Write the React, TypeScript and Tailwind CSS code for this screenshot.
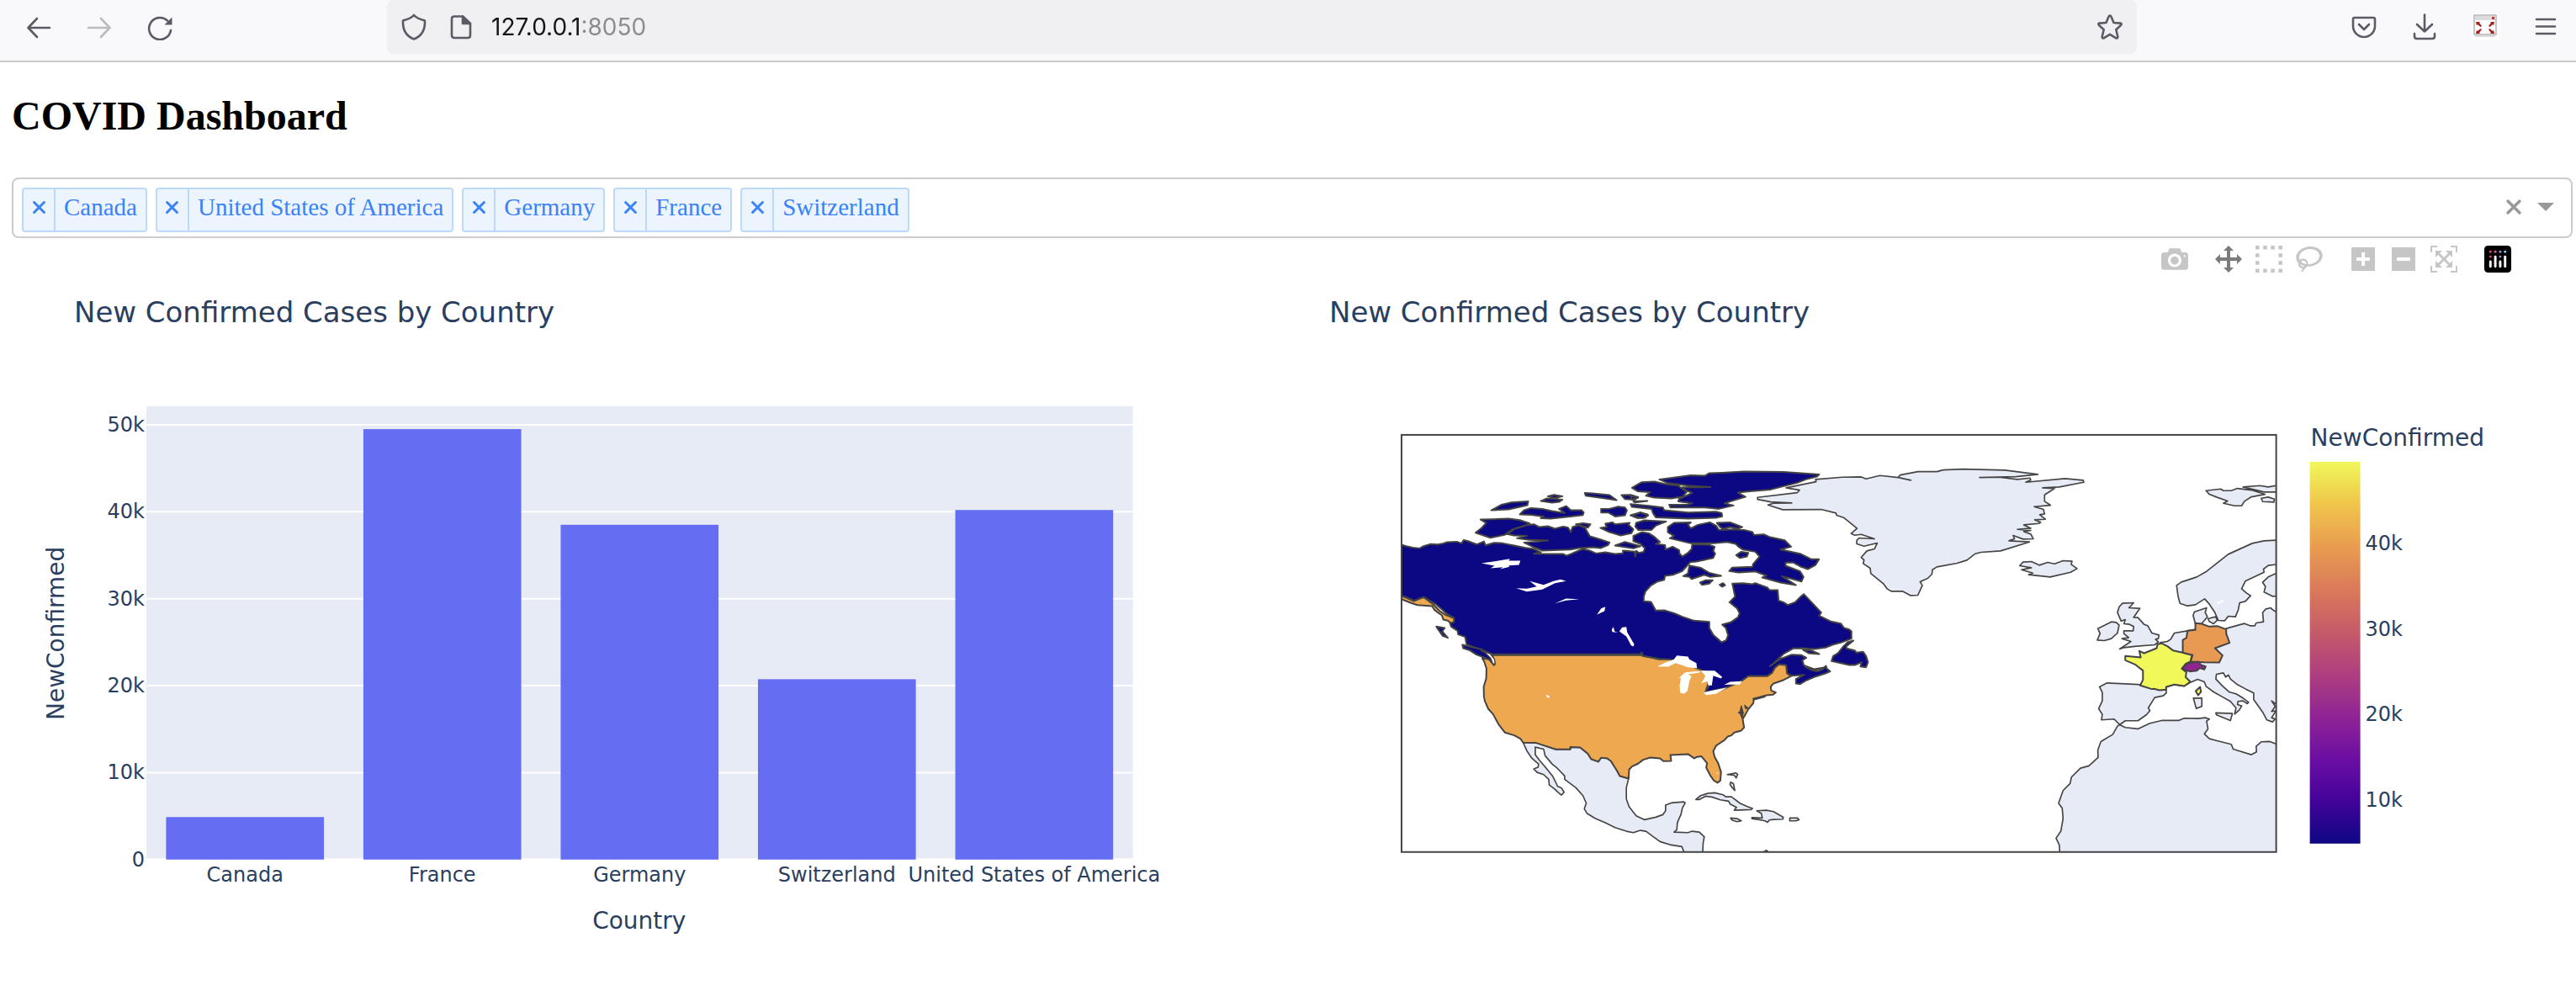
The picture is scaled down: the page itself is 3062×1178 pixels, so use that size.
import { useState } from "react";
import type { ReactNode } from "react";

/* ------------------------------ browser chrome ------------------------------ */

function ToolButton({ label, children }: { label: string; children: ReactNode }) {
  return (
    <button type="button" aria-label={label} className="flex h-16 w-[72px] items-center justify-center text-[#5b5b66]">
      {children}
    </button>
  );
}

function Line({ d, className = "" }: { d: string; className?: string }) {
  return (
    <svg
      viewBox="0 0 32 32"
      className={`size-8 shrink-0 ${className}`}
      fill="none"
      stroke="currentColor"
      strokeWidth="2.6"
      strokeLinecap="round"
      strokeLinejoin="round"
    >
      <path d={d} />
    </svg>
  );
}

function ExtensionIcon() {
  return (
    <svg viewBox="0 0 32 32" className="size-8">
      <rect width="32" height="32" fill="#fff" />
      <rect x="3" y="2" width="26" height="23" fill="#fff" stroke="#b4b4b8" strokeWidth="1.5" />
      <rect x="4" y="3" width="24" height="5" fill="#dcdce0" />
      <rect x="24" y="4" width="3" height="3" fill="#c0392b" />
      <path d="M4 27h24" stroke="#d0d0d0" strokeWidth="1.5" />
      <g fill="#a3201b">
        <path d="M5 10h5l-1 1 3 4-1.500 1-3.500-3-1 1.500z" />
        <path d="M27 10h-5l1 1-3 4 1.500 1 3.500-3 1 1.500z" />
        <path d="M5 24h5l-1-1 3-4-1.500-1-3.500 3-1-1.500z" />
        <path d="M27 24h-5l1-1-3-4 1.500-1 3.500 3 1-1.500z" />
      </g>
    </svg>
  );
}

function BrowserBar() {
  const [url, setUrl] = useState("127.0.0.1:8050");
  return (
    <header className="flex items-start border-b-2 border-[#cccccd] bg-[#f9f9fb] pb-2">
      <nav className="flex pl-[10px]">
        <ToolButton label="Back">
          <Line d="M29 17H3.500M14 6L3.500 17L14 28" />
        </ToolButton>
        <ToolButton label="Forward">
          <Line className="text-[#bbbbc0]" d="M3 17H28.500M18 6L28.500 17L18 28" />
        </ToolButton>
        <ToolButton label="Reload">
          <svg viewBox="0 0 32 32" className="size-8" fill="none" stroke="currentColor" strokeWidth="2.6" strokeLinecap="round">
            <path d="M29 20A13 13 0 1 1 25 8.500" />
            <path d="M30.500 4.500v9h-9z" fill="currentColor" stroke="none" />
          </svg>
        </ToolButton>
      </nav>
      <div className="mx-[234px] flex h-16 flex-1 items-center rounded-lg bg-[#f0f0f2] px-4 text-[#5b5b66]">
        <Line d="M16 2C19 5.500 25 7.500 29 8.500C29.500 19 25 27 16 30.500C7 27 2.500 19 3 8.500C7 7.500 13 5.500 16 2Z" />
        <svg viewBox="0 0 32 32" className="ml-6 size-8 shrink-0" fill="none" stroke="currentColor" strokeWidth="2.6" strokeLinejoin="round">
          <path d="M8 3.500H18L27 12V26Q27 29 24 29H8Q5 29 5 26V6.500Q5 3.500 8 3.500Z" />
          <path d="M18 3.500V12H27Z" fill="currentColor" />
        </svg>
        <input
          aria-label="Address"
          value={url}
          onChange={(e) => setUrl(e.target.value)}
          className="ml-5 min-w-0 flex-1 bg-[linear-gradient(to_right,#15141a_108px,#8a8a8f_108px)] bg-clip-text font-[Inter,sans-serif] text-[28px] leading-9 text-transparent outline-none"
        />
        <button type="button" aria-label="Bookmark this page">
          <Line d="M16 2.500Q17 2.500 17.500 3.800L20.500 11L28.300 11.600Q30.800 12 29 14L23.300 19.300L25.300 27.500Q25.500 30.300 23 29.200L16 24.800L9 29.200Q6.500 30.300 6.700 27.500L8.700 19.300L3 14Q1.200 12 3.700 11.600L11.500 11L14.500 3.800Q15 2.500 16 2.500Z" />
        </button>
      </div>
      <div className="flex">
        <ToolButton label="Save to Pocket">
          <Line d="M5 5H27Q29 5 29 7V15A13 13 0 0 1 3 15V7Q3 5 5 5ZM10 13L16 19L22 13" />
        </ToolButton>
        <ToolButton label="Downloads">
          <Line d="M16 1.500V21.500M7 13L16 21.500L25 13M4 24V27Q4 30 7 30H25Q28 30 28 27V24" />
        </ToolButton>
        <ToolButton label="Screenshot extension">
          <ExtensionIcon />
        </ToolButton>
        <ToolButton label="Open menu">
          <Line d="M5 7H27M5 15.500H27M5 24H27" />
        </ToolButton>
      </div>
    </header>
  );
}

/* ------------------------------ country picker ------------------------------ */

const COUNTRIES = ["Canada", "United States of America", "Germany", "France", "Switzerland"];

function Cross({ className }: { className: string }) {
  return (
    <svg viewBox="0 0 20 20" className={className} fill="none" stroke="currentColor" strokeWidth="3.500" strokeLinecap="round">
      <path d="M3 3L17 17M17 3L3 17" />
    </svg>
  );
}

function CountrySelect() {
  const [selected, setSelected] = useState(COUNTRIES);
  return (
    <div className="flex items-start gap-[10px] rounded-lg border-2 border-[#cccccc] bg-white pt-[10px] pr-4 pb-[5px] pl-[10px]">
      {selected.map((name) => (
        <div
          key={name}
          className="flex h-[53px] items-stretch rounded-[4px] border-2 border-[#bcd8fb] bg-[#ecf4fe] text-[29px] leading-[42px] text-[#3a82f6]"
        >
          <button
            type="button"
            aria-label={`Remove ${name}`}
            onClick={() => setSelected(selected.filter((n) => n !== name))}
            className="flex w-[38px] items-center justify-center border-r-2 border-[#bcd8fb] pb-[6px]"
          >
            <Cross className="size-[17px]" />
          </button>
          <span className="px-[10px]">{name}</span>
        </div>
      ))}
      <input aria-label="Countries" className="h-[53px] min-w-0 flex-1 bg-transparent text-[29px] outline-none" />
      <button
        type="button"
        aria-label="Clear all"
        onClick={() => setSelected([])}
        className="flex h-[46px] w-7 items-center justify-center text-[#999999]"
      >
        <Cross className="size-5" />
      </button>
      <button type="button" aria-label="Open list" className="flex h-[46px] w-7 items-center justify-center text-[#999999]">
        <svg viewBox="0 0 20 10" className="h-[10px] w-5" fill="currentColor">
          <path d="M0 0H20L10 10Z" />
        </svg>
      </button>
    </div>
  );
}

/* --------------------------------- bar chart -------------------------------- */

const LABEL_FONT = "font-['DejaVu_Sans',Verdana,sans-serif]";

const BARS = [
  { name: "Canada", value: 4890 },
  { name: "France", value: 49500 },
  { name: "Germany", value: 38500 },
  { name: "Switzerland", value: 20740 },
  { name: "United States of America", value: 40200 },
];

const TICKS = [0, 10, 20, 30, 40, 50];

function BarChart() {
  const left = 174;
  const right = 1347;
  const base = 1022;
  const perThousand = 10.34;
  const step = (right - left) / BARS.length;
  const barWidth = step * 0.8;
  return (
    <svg
      viewBox="14 283 1492 895"
      role="img"
      aria-label="Bar chart of new confirmed cases by country"
      className={`block w-full fill-[#2a3f5f] ${LABEL_FONT}`}
    >
      <text x="88" y="383" className="text-[34px]">New Confirmed Cases by Country</text>
      <rect x={left} y="483" width={right - left} height={base - 483} className="fill-[#e6ebf5]" />
      {TICKS.map((t) => {
        const y = base - t * perThousand;
        return (
          <g key={t}>
            <path d={`M${left} ${y}H${right}`} className="stroke-white" strokeWidth={t ? 2 : 3} />
            <text x="172" y={y + 8} textAnchor="end" className="text-[24px]">
              {t ? `${t}k` : "0"}
            </text>
          </g>
        );
      })}
      {BARS.map((b, i) => {
        const height = (b.value / 1000) * perThousand;
        const x = left + step * (i + 0.1);
        return (
          <g key={b.name}>
            <rect x={x} y={base - height} width={barWidth} height={height} className="fill-[#656ef2]" />
            <text x={x + barWidth / 2} y="1048" textAnchor="middle" className="text-[24px]">
              {b.name}
            </text>
          </g>
        );
      })}
      <text x="760" y="1104" textAnchor="middle" className="text-[28px]">Country</text>
      <text transform="translate(76 753) rotate(-90)" textAnchor="middle" className="text-[28px]">NewConfirmed</text>
    </svg>
  );
}

/* ------------------------------------ map ----------------------------------- */

/* Outlines are digitised sheet by sheet; each sheet has its own origin. */
const SHEETS = {
  nw: [0, 0],
  ne: [840, 120],
  sw: [180, 750],
  se: [840, 750],
  gl: [1260, 90],
  eu: [2310, 150],
  af: [2310, 780],
} as const;

type Sheet = keyof typeof SHEETS;
type Outline = [Sheet, string][];

function toPath(outline: Outline): string {
  const points = outline.flatMap(([sheet, list]) =>
    list.split(" ").map((pair) => {
      const [x, y] = pair.split(",").map(Number);
      return `${x + SHEETS[sheet][0]} ${y + SHEETS[sheet][1]}`;
    }),
  );
  return `M${points.join("L")}Z`;
}

function sheetPaths(sheet: Sheet, lists: string[]): string {
  return lists.map((l) => toPath([[sheet, l]])).join("");
}

const GREENLAND =
  "530,83 465,76 415,88 398,81 330,82 235,90 237,98 130,120 178,128 170,137 28,154 28,161 75,170 150,174 85,175 65,181 118,198 255,197 308,210 310,218 335,226 383,265 362,283 375,289 398,286 445,302 390,299 382,308 382,320 408,328 455,317 445,338 418,345 398,368 408,377 405,390 430,407 432,425 478,463 490,480 505,489 545,489 573,504 600,503 616,468 608,455 635,443 650,428 652,412 668,402 740,389 775,378 805,355 825,350 895,345 998,313 925,309 945,302 940,290 975,303 1012,302 1003,285 978,276 1003,272 955,268 1003,264 978,252 1032,247 1038,243 1017,234 1055,232 1035,216 1052,213 1048,197 1015,187 1073,182 1052,168 1052,145 1088,122 1045,120 1105,117 1192,100 1190,93 1125,87 985,100 1003,92 1000,85 955,90 890,82 820,83 950,80 1028,72 910,57 760,53 690,56 668,62 600,62 537,74 530,83 575,93";

const ICELAND =
  "963,398 975,385 1005,383 1033,396 1063,386 1088,391 1118,380 1150,382 1147,393 1168,408 1145,421 1072,438 995,430 1010,424 970,412 1005,405";

const MEXICO: Outline = [
  ["sw", "272,369 318,368 388,393 440,393 440,385 475,386 502,408 515,428 540,437 550,423 572,425 585,435 607,470 617,488 648,497 640,530 640,570 650,598 675,630 705,644 745,635 770,626 780,612 780,592 800,584"],
  ["se", "185,580 190,584 180,602 175,625 168,640 162,655 160,680 150,688 200,690 215,685 240,688 258,705 254,727 252,770 190,770 178,740 135,733 100,722 70,700 50,685 30,682 5,690"],
  ["sw", "640,685 600,672 565,655 530,640 500,622 490,605 497,585 485,558 460,530 420,500 420,488 398,465 390,457 375,445 350,415 345,392 315,385 315,412 330,432 350,455 378,490 395,525 408,530 418,546 408,556 395,545 385,535 365,520 363,500 345,483 322,475 310,463 325,457 327,445 303,425 285,398"],
];

const CARIBBEAN = [
  "228,572 245,558 270,550 295,548 325,555 335,562 355,562 385,585 410,596 430,604 425,608 365,610 373,600 350,588 345,578 315,573 285,563 262,560 240,572",
  "445,612 480,610 505,615 540,635 538,642 505,643 490,645 484,653 475,648 450,643 428,640 428,636 465,638 462,622",
  "352,638 375,640 390,648 375,651 358,646",
  "563,638 590,638 596,644 585,648 563,648",
  "340,483 370,477 377,482 372,495 365,485",
  "352,510 362,515 367,540 358,530 350,518",
  "470,758 480,753 485,758",
];

const EUROPE: Outline = [
  ["eu", "650,562 715,544 735,552 752,552 757,542 783,538 780,505 790,493 808,488 820,498 840,508"],
  ["af", "840,190 825,200 812,190 825,210 812,228 828,225 812,250 825,255 815,265 795,258 780,230 748,185 748,162 720,148 690,132 665,112 658,98 648,105 640,90 615,95 613,112 635,135 660,158 685,165 710,180 730,195 725,200 710,190 692,192 690,203 705,208 697,222 680,237 685,215 665,192 635,175 605,158 578,138 572,122 548,113 520,125 500,137 465,132 436,140 436,162 425,172 395,178 372,215 378,225 365,240 335,261 290,261 270,275 250,255 205,258 208,238 195,218 208,190 208,160 198,140 225,126 343,132 400,80"],
  ["eu", "415,612 440,608 452,600 465,578 512,570 540,565 580,600"],
];

const EUROPE_ISLANDS = [
  "578,70 630,64 640,70 668,70 690,62 740,68 788,83 740,92 715,108 705,124 680,124 640,115 655,107 615,93 590,83",
  "710,57 770,52 800,57 840,50 840,75 785,75",
  "775,97 800,93 822,100 820,111 780,109",
  "840,246 785,249 743,258 657,297 580,358 545,378 490,396 473,408 478,445 485,472 512,481 540,477 573,456 590,475 608,502 622,533 645,534 657,518 683,520 693,495 698,470 718,465 737,445 722,435 705,420 718,393 785,361 783,350 800,337 840,332",
  "840,360 800,378 780,397 790,412 785,432 815,447 840,445",
  "540,545 532,515 537,502 580,488 575,505 583,520 562,545",
  "585,527 612,520 618,532 605,545 590,537",
  "280,472 320,470 303,488 342,490 320,522 335,523 357,547 370,552 385,578 410,585 408,598 398,600 408,610 395,620 330,625 285,630 270,635 310,608 278,598 302,594 285,580 285,570 318,570 320,555 305,547 285,545 290,530 275,535 262,505 268,485",
  "190,603 200,580 192,562 240,538 258,540 268,550 262,578 240,598 215,605",
];

const MEDITERRANEAN_ISLANDS = [
  "533,180 563,180 563,210 543,217",
  "613,233 672,235 665,260 615,240",
];

const AFRICA =
  "270,275 290,285 335,290 378,270 420,260 480,260 500,252 550,253 575,250 590,255 580,262 585,290 572,308 590,325 620,333 668,345 675,362 740,382 758,372 757,352 775,336 805,335 840,348 840,770 57,770 55,705 43,680 60,655 68,610 65,573 52,555 68,510 93,485 98,462 130,430 160,422 193,392 192,365 203,335 245,310 262,280";

const CANADA: Outline = [
  ["nw", "0,408 35,418 58,423 82,426 97,418 120,411 148,412 168,408 180,404 215,402 232,408 240,396 255,400 287,412 312,401 317,415 348,406 380,408 420,416 460,424 490,428 515,440 490,445 540,446 595,446 608,452 625,445 650,434 665,428 690,434 712,444 745,440 780,446 808,444 808,434 850,438"],
  ["ne", "12,335 15,315 25,322 42,318 46,305 30,290 5,280 5,262 35,248 60,252 80,265 100,283 85,290 118,294 120,310 145,300 168,312 170,325 180,335 200,322 213,308 215,292 250,292 275,293 295,300 290,315 297,325 290,340 255,348 230,353 208,355 195,370 178,388 148,400 118,404 115,418 92,424 68,438 48,460 42,478 42,495 68,497 85,528 115,527 150,537 180,550 222,564 276,568 276,590 290,615 320,641 336,634 343,616 335,590 322,578 352,570 378,552 384,538 375,520 348,498 368,478 360,440 358,432 395,430 430,434 440,430 483,446 490,454 520,455 523,492 540,498 556,508 582,498 600,480 613,469 675,535 668,546 710,567 745,574 757,590 775,595 783,602 783,628 745,642 715,650 690,660 650,665 610,662 575,663 540,683 505,716 492,726"],
  ["se", "530,70 570,55 605,57 622,66 608,75 612,90 620,100 640,110 660,115 680,108 692,95 695,105 707,115 690,122 650,135 620,148 600,160 585,158 585,142 615,127 570,130 553,122 550,93 525,90 510,102 500,120 482,132 415,132 390,150 340,172 262,190 275,165 250,112 235,105 210,90 130,73 100,70 40,60"],
  ["nw", "880,810 875,798 872,804 345,804 320,795 300,788 250,768 245,742 220,733 218,720 195,705 190,690 205,685 203,672 180,660 158,640 140,625 97,600 62,612 35,600 0,590"],
];

const ARCTIC_WEST = [
  "300,323 345,322 400,320 440,325 475,337 460,345 420,357 400,372 385,378 335,388 282,370 305,352 320,335",
  "390,374 415,358 460,344 490,340 510,350 540,347 565,356 595,348 612,352 622,368 628,350 650,343 672,352 690,383 730,395 760,405 755,414 728,425 700,422 650,425 620,430 520,434 490,422 455,405 500,402 540,398 475,396 430,390 465,381 420,380",
  "640,340 665,336 692,340 683,352 660,345",
  "338,290 375,270 410,262 470,258 467,272 400,287",
  "515,257 535,248 565,250 592,252 580,260 555,263",
  "540,240 562,235 592,240 565,247",
  "440,305 455,290 480,282 520,285 555,293 600,300 580,285 605,275 622,290 660,290 668,298 665,307 620,312 550,320 515,318 525,312 480,306",
  "672,228 700,230 760,236 785,254 740,247 675,238",
  "803,236 835,235 862,243 850,252 815,250",
  "730,285 760,285 790,277 815,280 822,290 815,308 780,312 755,298 730,298",
  "728,353 750,350 745,338 770,333 780,340 832,335 828,342 845,358 838,372 800,380 760,368",
  "835,308 870,298 895,305 890,315 860,318",
  "780,416 815,403 870,418 845,426",
  "142,705 172,710 163,722 183,745 165,738",
  "235,770 300,785 330,800 335,815 350,838 320,818 285,805 262,790 238,782",
];

const ARCTIC_EAST = [
  "0,90 35,70 80,68 120,77 165,82 195,105 180,122 140,128 80,125 50,118 65,105 20,102",
  "98,60 210,45 260,47 275,38 320,36 400,32 540,33 668,42 660,50 620,60 590,72 495,96 420,102 378,107 405,122 362,135 330,145 362,153 310,165 260,160 137,160 133,150 200,150 215,145 165,138 168,130 215,108 190,98 180,88 240,88 280,87 200,82 125,72",
  "-5,148 60,154 110,160 115,170 200,178 300,175 320,180 322,192 300,197 200,200 85,195 75,180 70,165 0,158",
  "5,188 30,178 58,188 40,198 8,193",
  "-5,118 22,125 0,132",
  "5,138 55,137 10,142",
  "15,215 45,206 122,210 85,225 70,240 22,240 12,228",
  "128,230 150,215 210,213 200,222 210,235 235,222 278,213 300,225 310,240 360,238 400,240 430,248 435,258 470,256 490,265 545,277 568,300 530,310 600,325 640,345 667,345 655,365 627,380 600,370 575,356 548,357 548,368 600,388 612,408 605,424 535,405 585,437 530,428 465,410 480,403 440,388 380,392 347,387 357,375 430,372 432,362 455,335 440,318 395,310 380,300 370,290 340,283 290,288 210,288 135,270 150,262 128,248",
  "303,215 350,213 393,230 380,235 350,230 325,236 315,230",
  "372,330 390,318 415,322 410,335 385,340",
  "205,367 245,375 275,393 318,404 280,408 258,400 213,415 205,408 183,405 200,395",
  "243,428 262,420 288,420 275,432 250,436",
  "313,436 325,430 332,437 322,443",
  "790,635 765,655 765,663 795,670 800,678 825,675 835,690 842,712 835,730 815,727 820,712 795,722 775,722 712,708 718,690 735,680 755,655 770,640",
  "610,668 640,670 668,683 630,680",
  "617,725 650,737 690,730 650,742",
];

const USA: Outline = [
  ["sw", "160,57 693,57 693,48 698,60 730,66 757,72 795,72"],
  ["se", "210,95 235,105 252,112 280,118 275,150 262,188 300,190 340,172 390,150 415,132 482,132 500,120 510,102 525,90 550,93 553,122 567,132 540,146 505,158 495,170 497,183 513,190 503,198 480,200 435,212 433,228 415,250 405,268 395,285 400,315 390,326 365,333 355,343 342,347 330,360 300,380 290,400 295,420 308,443 318,475 315,505 305,512 292,504 280,487 265,458 268,442 248,418 232,420 222,425 200,410 137,413 140,434 112,435 100,425 65,422 40,430 22,444 0,454"],
  ["sw", "650,465 648,497 617,488 607,470 585,435 572,425 550,423 540,437 515,428 502,408 475,386 440,385 440,393 388,393 318,370 272,369 262,355 240,343 207,333 185,305 165,268 147,248 135,220 132,205 131,170 140,140 141,105 133,80 126,68 150,72 168,93 171,88 165,65"],
];

const ALASKA =
  "0,590 35,602 62,614 97,600 130,625 155,650 175,663 205,675 205,688 195,692 183,684 167,680 162,665 148,655 135,645 127,632 75,628 50,620 0,600";

const PUGET_SOUND = "334,802 350,822 352,838 344,838 336,818 318,800 300,790";

const FRANCE: Outline = [
  ["eu", "405,618 420,615 440,625 460,640 495,648 528,657 522,680 505,688 492,705 508,718"],
  ["af", "505,105 522,122 500,137 465,132 436,140 435,150 412,152 392,147 385,148 343,135 353,115 353,82 325,60 290,45 290,30 345,35 340,12 357,20 402,2"],
];

const GERMANY =
  "540,543 562,545 590,555 618,553 650,565 650,580 662,613 610,632 637,658 625,683 570,682 523,680 530,657 495,648 495,603 508,595 512,570 540,567";

const SWITZERLAND = "492,705 510,687 550,680 560,692 577,697 572,708 555,703 545,712 520,715 495,707";

const LAKES_NORTH = [
  "303,479 350,472 405,463 400,470 442,470 437,485 400,487 403,492 370,500 380,493 335,497 350,488",
  "427,568 465,570 500,562 475,543 525,556 560,543 585,537 605,543 565,550 520,573 465,580",
  "565,622 605,605 652,607 605,612",
  "715,663 730,640 745,634 742,650 730,655",
  "795,722 805,708 820,706 823,725 848,768 845,776 837,772 820,740",
  "768,715 774,706 778,722 790,726 770,724",
];

const LAKES_SOUTH = [
  "90,97 120,83 150,72 160,58 200,62 205,72 230,85 232,103 200,100 170,90 155,85 130,98",
  "170,165 175,138 168,138 190,118 245,113 238,120 200,125 212,132 205,150 198,185 185,195 172,190",
  "245,112 295,112 322,135 318,140 290,130 285,165 272,165 270,150 247,157 255,145 262,130",
  "255,190 290,182 340,172 300,195 265,199",
  "328,163 350,152 392,150 385,162 345,162",
  "302,475 306,475 306,479 302,479",
];

function WorldMap() {
  return (
    <>
      <clipPath id="map-frame">
        <rect x="1666" y="517" width="1040" height="496" />
      </clipPath>
      <g clipPath="url(#map-frame)">
        <g transform="translate(1660 510) scale(0.3333)" className="stroke-[#444444]" strokeLinejoin="round">
          <g strokeWidth="5" className="fill-[#e6ebf5]">
            <path d={sheetPaths("gl", [GREENLAND, ICELAND])} />
            <path d={toPath(MEXICO)} />
            <path d={sheetPaths("se", CARIBBEAN)} />
            <path d={toPath(EUROPE)} />
            <path d={sheetPaths("eu", EUROPE_ISLANDS)} />
            <path d={sheetPaths("af", [...MEDITERRANEAN_ISLANDS, AFRICA])} />
          </g>
          <g strokeWidth="6">
            <g className="fill-[#0c0782]">
              <path d={toPath(CANADA)} />
              <path d={sheetPaths("nw", ARCTIC_WEST)} />
              <path d={sheetPaths("ne", ARCTIC_EAST)} />
            </g>
            <g className="fill-[#eda850]">
              <path d={toPath(USA)} />
              <path d={sheetPaths("nw", [ALASKA])} />
            </g>
            <path d={sheetPaths("nw", [PUGET_SOUND])} strokeWidth="4" className="fill-white" />
            <path d={sheetPaths("se", ["432,212 475,206 436,216", "390,238 385,262 393,282 397,262", "380,262 392,268 386,258", "402,236 414,246 406,248"])} strokeWidth="4" className="fill-[#444444]" />
            <g className="fill-[#f0f85a]">
              <path d={toPath(FRANCE)} />
              <path d={sheetPaths("af", ["541,155 557,140 560,158 550,170"])} />
            </g>
            <path d={sheetPaths("eu", [GERMANY])} className="fill-[#e89a52]" />
            <path d={sheetPaths("eu", [SWITZERLAND])} className="fill-[#90258f]" />
          </g>
          <g className="fill-white stroke-none">
            <path d={sheetPaths("nw", LAKES_NORTH)} />
            <path d={sheetPaths("se", LAKES_SOUTH)} />
            <path d={sheetPaths("sw", ["352,198 366,203 365,210 357,207"])} />
            <path d={sheetPaths("eu", ["615,470 642,459 640,466 620,475"])} />
          </g>
        </g>
      </g>
      <rect x="1666" y="517" width="1040" height="496" fill="none" className="stroke-[#444444]" strokeWidth="2" />
    </>
  );
}

const SCALE_STOPS = ["#0d0782", "#430399", "#6c0ea3", "#902494", "#ae3f7f", "#c65b69", "#da7a5a", "#e99c50", "#f0c54c", "#f0f85a"];

const SCALE_LABELS = [
  { text: "40k", y: 654 },
  { text: "30k", y: 756 },
  { text: "20k", y: 857 },
  { text: "10k", y: 959 },
];

function MapChart() {
  return (
    <svg
      viewBox="1506 283 1492 895"
      role="img"
      aria-label="Map of new confirmed cases by country"
      className={`block w-full fill-[#2a3f5f] ${LABEL_FONT}`}
    >
      <linearGradient id="plasma" x1="0" y1="1" x2="0" y2="0">
        {SCALE_STOPS.map((c, i) => (
          <stop key={c} offset={i / (SCALE_STOPS.length - 1)} stopColor={c} />
        ))}
      </linearGradient>
      <text x="1580" y="383" className="text-[34px]">New Confirmed Cases by Country</text>
      <WorldMap />
      <text x="2747" y="530" className="text-[28px]">NewConfirmed</text>
      <rect x="2746" y="549" width="60" height="454" fill="url(#plasma)" />
      {SCALE_LABELS.map((l) => (
        <text key={l.text} x="2812" y={l.y} className="text-[24px]">
          {l.text}
        </text>
      ))}
    </svg>
  );
}

/* ---------------------------------- modebar --------------------------------- */

const MODE_GROUPS = [
  [
    {
      label: "Download plot as a png",
      width: 1000,
      d: "m500 450c-83 0-150-67-150-150 0-83 67-150 150-150 83 0 150 67 150 150 0 83-67 150-150 150z m400 150h-120c-16 0-34 13-39 29l-31 93c-6 15-23 28-40 28h-340c-16 0-34-13-39-28l-31-94c-6-15-23-28-40-28h-120c-55 0-100-45-100-100v-450c0-55 45-100 100-100h800c55 0 100 45 100 100v450c0 55-45 100-100 100z m-400-550c-138 0-250 112-250 250 0 138 112 250 250 250 138 0 250-112 250-250 0-138-112-250-250-250z m365 380c-19 0-35 16-35 35 0 19 16 35 35 35 19 0 35-16 35-35 0-19-16-35-35-35z",
    },
  ],
  [
    {
      label: "Pan",
      width: 1000,
      active: true,
      d: "m1000 350l-187 188 0-125-250 0 0 250 125 0-188 187-187-187 125 0 0-250-250 0 0 125-188-188 186-187 0 125 252 0 0-250-125 0 187-188 188 188-125 0 0 250 250 0 0-126 187 188z",
    },
    {
      label: "Box select",
      width: 1000,
      d: "m0 850l0-143 143 0 0 143-143 0z m286 0l0-143 143 0 0 143-143 0z m285 0l0-143 143 0 0 143-143 0z m286 0l0-143 143 0 0 143-143 0z m-857-286l0-143 143 0 0 143-143 0z m857 0l0-143 143 0 0 143-143 0z m-857-285l0-143 143 0 0 143-143 0z m857 0l0-143 143 0 0 143-143 0z m-857-286l0-143 143 0 0 143-143 0z m286 0l0-143 143 0 0 143-143 0z m285 0l0-143 143 0 0 143-143 0z m286 0l0-143 143 0 0 143-143 0z",
    },
    {
      label: "Lasso select",
      width: 1031,
      d: "m1018 538c-36 207-290 336-568 286-277-48-473-256-436-463 10-57 36-108 76-151-13-66 11-137 68-183 34-28 75-41 114-42l-55-70 0 0c-2-1-3-2-4-3-10-14-8-34 5-45 14-11 34-8 45 4 1 1 2 3 2 5l0 0 113 140c16 11 31 24 45 40 4 3 6 7 8 11 48-3 100 0 151 9 278 48 473 255 436 462z m-624-379c-80 14-149 48-197 96 42 42 109 47 156 9 33-26 47-66 41-105z m-187-74c-19 16-33 37-39 60 50-32 109-55 174-68-42-25-95-24-135 8z m360 75c-34-7-69-9-102-8 8 62-16 128-68 170-73 59-175 54-244-5-9 20-16 40-20 61-28 159 121 317 333 354s407-60 434-217c28-159-121-318-333-355z",
    },
  ],
  [
    {
      label: "Zoom in",
      width: 875,
      d: "m1 787l0-875 875 0 0 875-875 0z m687-500l-187 0 0-187-125 0 0 187-188 0 0 125 188 0 0 187 125 0 0-187 187 0 0-125z",
    },
    {
      label: "Zoom out",
      width: 875,
      d: "m0 788l0-876 875 0 0 876-875 0z m688-500l-500 0 0 125 500 0 0-125z",
    },
    {
      label: "Reset",
      width: 1000,
      d: "m250 850l-187 0-63 0 0-62 0-188 63 0 0 188 187 0 0 62z m688 0l-188 0 0-62 188 0 0-188 62 0 0 188 0 62-62 0z m-875-938l0 188-63 0 0-188 0-62 63 0 187 0 0 62-187 0z m875 188l0-188-188 0 0-62 188 0 62 0 0 62 0 188-62 0z m-125 188l-1 0-93-94-156 156 156 156 92-93 2 0 0 250-250 0 0-2 93-92-156-156-156 156 94 92 0 2-250 0 0-250 0 0 93 93 157-156-157-156-93 94 0 0 0-250 250 0 0 0-94 93 156 157 156-157-93-93 0 0 250 0 0 250z",
    },
  ],
];

function Modebar() {
  return (
    <div className="absolute top-[9px] right-3 flex gap-8">
      {MODE_GROUPS.map((group) => (
        <div key={group[0].label} className="flex gap-4">
          {group.map((m) => (
            <button
              key={m.label}
              type="button"
              aria-label={m.label}
              className={"active" in m ? "text-[#7b7b7b]" : "text-[#c6c6c6]"}
            >
              <svg viewBox={`0 0 ${m.width} 1000`} className="size-8" fill="currentColor">
                <path transform="matrix(1 0 0 -1 0 850)" d={m.d} />
              </svg>
            </button>
          ))}
        </div>
      ))}
      <a href="https://plotly.com/" aria-label="Produced with Plotly">
        <svg viewBox="0 0 132 132" className="size-8">
          <rect width="132" height="132" rx="18" />
          <g fill="#ef3f6b">
            <circle cx="30" cy="30" r="6" />
            <circle cx="30" cy="54" r="6" />
          </g>
          <circle cx="54" cy="30" r="6" fill="#c764a0" />
          <circle cx="78" cy="30" r="6" fill="#a78fd0" />
          <circle cx="78" cy="54" r="6" fill="#a78fd0" />
          <circle cx="102" cy="30" r="6" fill="#7fd0f5" />
          <path stroke="#fff" strokeWidth="12" strokeLinecap="round" d="M30 78V102M54 54V102M78 78V102M102 54V102" />
        </svg>
      </a>
    </div>
  );
}

/* ------------------------------------ page ---------------------------------- */

export default function App() {
  return (
    <div className="bg-white font-['Liberation_Serif','Times_New_Roman',serif] text-black">
      <BrowserBar />
      <main className="pt-9 pr-1 pl-[14px]">
        <h1 className="mb-[45px] text-[48px] leading-[56px] font-bold">COVID Dashboard</h1>
        <CountrySelect />
        <div className="flex">
          <section className="w-[49%]">
            <BarChart />
          </section>
          <section className="relative w-[49%]">
            <MapChart />
            <Modebar />
          </section>
        </div>
      </main>
    </div>
  );
}
